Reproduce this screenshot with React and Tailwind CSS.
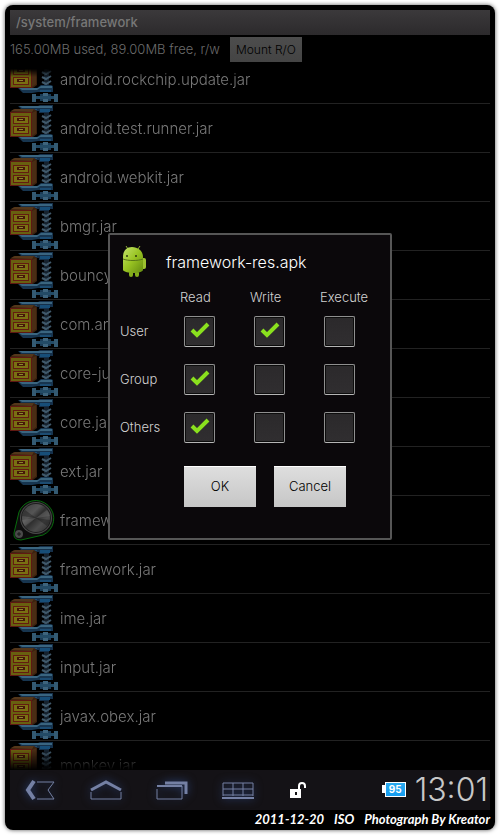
import React, { useState } from "react";

const files = [
  "android.rockchip.update.jar",
  "android.test.runner.jar",
  "android.webkit.jar",
  "bmgr.jar",
  "bouncycastle.jar",
  "com.android.location.jar",
  "core-junit.jar",
  "core.jar",
  "ext.jar",
  "framework-res.apk",
  "framework.jar",
  "ime.jar",
  "input.jar",
  "javax.obex.jar",
  "monkey.jar",
];

const columns = ["Read", "Write", "Execute"];
const rows = ["User", "Group", "Others"];

const ArchiveIcon = () => (
  <svg width="48" height="48" viewBox="0 0 48 48" className="shrink-0">
    {/* clamp */}
    <path d="M8 2 H28 L30 1 H43 V7 H39 V9 H29 V7 H13Z" fill="#15304a" />
    <path d="M9 2 H42 V4 H12Z" fill="#3a6580" />
    <path d="M14 5 H27 V6 H16Z" fill="#1f4c70" />
    <rect x="30" y="5" width="10" height="3" fill="#174e78" />
    <rect x="34" y="9" width="5" height="22" fill="#16222e" />
    <path
      d="M32 12 L36 14 L41 11 M32 17 L36 19 L41 16 M32 22 L36 24 L41 21 M32 27 L36 29 L41 26"
      fill="none"
      stroke="#40596b"
      strokeWidth="2"
    />
    <path d="M8 33 H27 L31 30 H41 L43 31 V37 H28 L22 38 H13Z" fill="#17354f" />
    <path d="M9 33 H28 L31 31 H42 V33 H30 L27 35 H12Z" fill="#3a6580" />
    <rect x="30" y="35" width="11" height="2" fill="#1c4c72" />
    <rect x="30" y="39" width="11" height="7" fill="#1b3c56" />
    <rect x="33" y="38" width="5" height="9" fill="#3d647d" />
    <rect x="22" y="39" width="4" height="8" fill="#345a72" />
    <rect x="44" y="39" width="4" height="8" fill="#345a72" />
    <rect x="26" y="41" width="18" height="3" fill="#234b66" />
    {/* cabinet */}
    <path d="M0 8 L4 5 H24 L27 7 V30 L23 33 H0Z" fill="#3c210f" />
    <path d="M1 7 L5 5 H24 L22 8Z" fill="#54371a" />
    <path d="M22 9 L26 7 V29 L22 32Z" fill="#4a2d14" />
    <rect x="0" y="8" width="22" height="25" fill="#5f1812" />
    <rect x="1" y="9" width="20" height="23" fill="#68600f" />
    <rect x="3" y="12" width="16" height="8" fill="#641b10" />
    <rect x="4" y="13" width="14" height="6" fill="#797012" />
    <rect x="3" y="22" width="16" height="8" fill="#641b10" />
    <rect x="4" y="23" width="14" height="6" fill="#797012" />
    <rect x="7" y="14" width="8" height="3" fill="#471708" />
    <rect x="9" y="15" width="4" height="1" fill="#8b8430" />
    <rect x="7" y="24" width="8" height="3" fill="#471708" />
    <rect x="9" y="25" width="4" height="1" fill="#8b8430" />
  </svg>
);

const KnobIcon = () => (
  <svg width="48" height="48" viewBox="0 0 48 48" className="shrink-0">
    <defs>
      <linearGradient id="knob" x1="0" y1="0" x2="1" y2="1">
        <stop offset="0" stopColor="#3c3c3c" />
        <stop offset="0.35" stopColor="#555" />
        <stop offset="0.5" stopColor="#303030" />
        <stop offset="0.7" stopColor="#4c4c4c" />
        <stop offset="1" stopColor="#2c2c2c" />
      </linearGradient>
    </defs>
    <path
      d="M4 37 L9 16 A18 18 0 1 1 33 39 L11 44 Q3 44 4 37Z"
      fill="#0d0d0d"
      stroke="#076b0c"
      strokeWidth="1"
    />
    <circle cx="26" cy="22" r="16" fill="#4a4a4a" />
    <circle cx="26" cy="22" r="15" fill="#1d1d1d" />
    <circle cx="26" cy="22" r="14" fill="url(#knob)" />
    <path d="M26 22 L12 24 A14 14 0 0 0 15 30Z M26 22 L40 20 A14 14 0 0 0 37 14Z" fill="#777" opacity="0.35" />
    <path d="M26 22 L12 20 A14 14 0 0 1 15 14Z M26 22 L40 24 A14 14 0 0 1 37 30Z" fill="#111" opacity="0.35" />
    <circle cx="9" cy="38" r="4" fill="#4a4a4a" />
    <path d="M7 38 H11 M9 36 V40" stroke="#191919" />
  </svg>
);

const AndroidIcon = () => (
  <svg width="30" height="34" viewBox="0 0 30 34">
    <defs>
      <linearGradient id="droid" x1="0" y1="0" x2="1" y2="1">
        <stop offset="0" stopColor="#c3e36a" />
        <stop offset="0.5" stopColor="#98c322" />
        <stop offset="1" stopColor="#638a10" />
      </linearGradient>
    </defs>
    <path d="M8 4 L6 1 M18 4 L20 1" stroke="#8faf35" fill="none" />
    <rect x="9" y="26" width="4" height="6" rx="2" fill="#85ae1c" />
    <rect x="15" y="26" width="4" height="6" rx="2" fill="#85ae1c" />
    <rect x="21" y="13" width="5" height="11" rx="2" fill="#9cc22f" />
    <path d="M3 12 C3 5 7 2 12 2 C18 2 23 6 23 12 V25 C22 29 5 29 3 25Z" fill="url(#droid)" />
    <path d="M3 14 C8 16 18 16 23 14" stroke="#577417" fill="none" />
    <circle cx="7" cy="11" r="1" fill="#2c360d" />
    <circle cx="16" cy="11" r="1" fill="#2c360d" />
  </svg>
);

const NavButton = ({ label, children }) => (
  <button aria-label={label} className="flex w-8 justify-center drop-shadow-[0_0_4px_#2c4478]">
    <svg width="32" height="22" viewBox="0 0 32 22" fill="none" stroke="#7480a4">
      {children}
    </svg>
  </button>
);

const PermissionBox = ({ label, checked, onChange }) => (
  <span className="relative block size-[31px]">
    <input
      type="checkbox"
      aria-label={label}
      checked={checked}
      onChange={onChange}
      className="peer block size-[31px] appearance-none rounded-xs border border-[#8f8f8f] border-b-[#b5b5b5] bg-linear-to-b from-[#2b292b] to-[#302e30] shadow-[inset_0_0_0_1px_#0c0c0c]"
    />
    <svg
      viewBox="0 0 31 31"
      className="pointer-events-none absolute inset-0 hidden peer-checked:block"
    >
      <path d="M8 14 L13 19 L24 8" fill="none" stroke="#8ae01e" strokeWidth="4" />
    </svg>
  </span>
);

const PermissionDialog = () => {
  const [permissions, setPermissions] = useState([
    [true, true, false],
    [true, false, false],
    [true, false, false],
  ]);

  const toggle = (r, c) => {
    setPermissions(
      permissions.map((row, i) =>
        row.map((value, j) => (i === r && j === c ? !value : value))
      )
    );
  };

  return (
    <div
      role="dialog"
      aria-labelledby="dialog-title"
      className="w-[284px] rounded-xs border-2 border-[#565656] bg-[#0b080b] pb-[31px] pl-[10px] text-[#d2d2d2]"
    >
      <div className="flex h-[53px] items-center gap-4">
        <AndroidIcon />
        <h2 id="dialog-title" className="text-base text-white">
          framework-res.apk
        </h2>
      </div>
      <table className="w-[270px] table-fixed text-[13px] leading-[19px]">
        <thead>
          <tr>
            <td className="w-[60px]"></td>
            {columns.map((column) => (
              <th key={column} scope="col" className="p-0 text-left font-light">
                {column}
              </th>
            ))}
          </tr>
        </thead>
        <tbody>
          {rows.map((row, r) => (
            <tr key={row} className="h-12">
              <th scope="row" className="p-0 text-left font-light">
                {row}
              </th>
              {columns.map((column, c) => (
                <td key={column} className="p-0 pl-1">
                  <PermissionBox
                    label={`${row} ${column}`}
                    checked={permissions[r][c]}
                    onChange={() => toggle(r, c)}
                  />
                </td>
              ))}
            </tr>
          ))}
        </tbody>
      </table>
      <div className="mt-[15px] flex gap-[18px] pl-16 text-[13px] text-black">
        <button className="h-[41px] w-[72px] border-t border-white bg-linear-to-b from-[#dedede] to-[#c6c6c6]">
          OK
        </button>
        <button className="h-[41px] w-[72px] border-t border-white bg-linear-to-b from-[#dedede] to-[#c6c6c6]">
          Cancel
        </button>
      </div>
    </div>
  );
};

const SystemBar = () => (
  <nav className="flex h-10 shrink-0 items-center bg-[#141216] pr-[2px] pl-[14px]">
    <div className="flex gap-[34px]">
      <NavButton label="Back">
        <path d="M10 2 L4 11 L10 20" strokeWidth="4" />
        <path d="M13 3 H30 L24 11 L30 20 H13" />
      </NavButton>
      <NavButton label="Home">
        <path d="M1 11 L16 3 L31 11" strokeWidth="3" />
        <path d="M1 13 V20 H31 V13" />
      </NavButton>
      <NavButton label="Recent apps">
        <path d="M9 4 H30 V15" strokeWidth="3" />
        <path d="M1 7 H26" strokeWidth="2" />
        <path d="M1 10 V20 H26 V7" />
      </NavButton>
      <NavButton label="Keyboard">
        <path d="M1 17 V4 H31 V17 M1 10 H31 M11 4 V17 M21 4 V17 M1 16 H31" />
        <path d="M0 19 H32" strokeWidth="2" />
      </NavButton>
    </div>
    <svg width="18" height="18" viewBox="0 0 18 18" className="ml-9">
      <path d="M9 8 V5 Q9 2 12 2 Q15 2 15 5 V7" fill="none" stroke="#fff" strokeWidth="2" />
      <path d="M0 8 H11 V17 H0Z" fill="#fff" />
      <path d="M5 11 H7 V14 H5Z" fill="#141216" />
    </svg>
    <div className="ml-auto flex items-center gap-[9px]">
      <div className="flex items-center pb-[2px]">
        <span className="h-2 w-[3px] bg-white"></span>
        <span className="flex h-[15px] w-[21px] items-center justify-center border border-white bg-linear-to-b from-[#2aaaf0] to-[#139cf0] text-[10px] leading-none font-bold text-white">
          95
        </span>
      </div>
      <time className="text-[32px] leading-10 font-light text-[#c8c8c8]">13:01</time>
    </div>
  </nav>
);

export default function App() {
  return (
    <div className="h-screen bg-white px-[5px] pt-[5px] pb-[10px] font-['Inter','Liberation_Sans',sans-serif] font-light">
      <div className="flex h-full flex-col rounded-lg bg-black px-[5px] pt-[5px] shadow-[0_0_4px_#555]">
        <main className="relative flex min-h-0 flex-1 flex-col">
          <h1 className="h-[25px] shrink-0 bg-linear-to-b from-[#3b393b] to-[#2c2a2c] px-[6px] text-[13px] leading-[25px] font-medium text-[#777]">
            /system/framework
          </h1>
          <div className="flex h-[34px] shrink-0 items-start gap-[10px] pt-[2px] text-[13px] leading-[25px] text-[#6c6c6c]">
            <span>165.00MB used, 89.00MB free, r/w</span>
            <button className="h-[25px] w-[72px] bg-linear-to-b from-[#4d4d4d] to-[#444] text-[12px] text-black">
              Mount R/O
            </button>
          </div>
          <div className="min-h-0 flex-1 overflow-hidden mask-[linear-gradient(to_bottom,transparent,black_8px,black_calc(100%-20px),transparent)]">
            <ul className="-mt-[14px]">
              {files.map((file) => (
                <li
                  key={file}
                  className="flex h-[49px] items-center gap-[2px] border-b border-[#222] text-[15px] text-[#787878]"
                >
                  {file.endsWith(".apk") ? <KnobIcon /> : <ArchiveIcon />}
                  <span className="pt-[2px]">{file}</span>
                </li>
              ))}
            </ul>
          </div>
          <div className="absolute inset-0 flex items-center justify-center pb-[7px]">
            <PermissionDialog />
          </div>
        </main>
        <SystemBar />
        <footer className="flex h-5 shrink-0 justify-end gap-[10px] font-['Lato',sans-serif] text-[13px] leading-[18px] font-bold text-white italic">
          <span>2011-12-20</span>
          <span>ISO</span>
          <span>Photograph By Kreator</span>
        </footer>
      </div>
    </div>
  );
}
